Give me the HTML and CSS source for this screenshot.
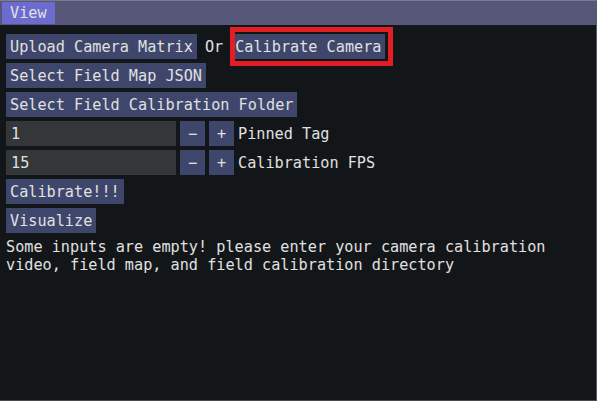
FILE: index.html
```html
<!DOCTYPE html>
<html>
<head>
<meta charset="utf-8">
<link rel="stylesheet" href="styles.css">
</head>
<body>
<div class="window">
  <div class="menubar">
    <span class="menu active">View</span>
  </div>
  <div class="content">
    <div class="row">
      <span class="btn">Upload Camera Matrix</span>
      <span class="label">Or</span>
      <span class="btn highlight-target">Calibrate Camera<span class="annot"></span></span>
    </div>
    <div class="row"><span class="btn">Select Field Map JSON</span></div>
    <div class="row"><span class="btn">Select Field Calibration Folder</span></div>
    <div class="row inner">
      <span class="input">1</span>
      <span class="btn sq">−</span>
      <span class="btn sq">+</span>
      <span class="label">Pinned Tag</span>
    </div>
    <div class="row inner">
      <span class="input">15</span>
      <span class="btn sq">−</span>
      <span class="btn sq">+</span>
      <span class="label">Calibration FPS</span>
    </div>
    <div class="row"><span class="btn">Calibrate!!!</span></div>
    <div class="row"><span class="btn">Visualize</span></div>
    <p class="msg">Some inputs are empty! please enter your camera calibration<br>video, field map, and field calibration directory</p>
  </div>
</div>
</body>
</html>
```

FILE: styles.css
```css
html, body {
  margin: 0;
  padding: 0;
  background: #131619;
}
body {
  width: 597px;
  height: 401px;
  overflow: hidden;
  font-family: "DejaVu Sans Mono", "Liberation Mono", monospace;
  font-size: 15.2px;
  line-height: 18px;
  color: #e0e0e0;
}
.window {
  box-sizing: border-box;
  width: 597px;
  height: 401px;
  border-top: 1px solid #7c7c8c;
  border-right: 1px solid #5a5a66;
  border-bottom: 1px solid #4a4a56;
  display: flex;
  flex-direction: column;
}
.menubar {
  height: 24px;
  background: #57577a;
  display: flex;
  align-items: stretch;
  padding: 1px 0 0 2px;
  box-sizing: border-box;
}
.menu {
  padding: 2px 8px 0 8px;
  box-sizing: border-box;
  height: 22px;
  white-space: pre;
}
.menu.active {
  background: #6b6bd0;
  width: 53px;
}
.content {
  padding: 9px 6px 0 6px;
  display: flex;
  flex-direction: column;
  gap: 4px;
}
.row {
  display: flex;
  align-items: center;
  gap: 8px;
}
.row.inner {
  gap: 4px;
}
.btn {
  background: #3f466c;
  padding: 4px 4px 3px 4px;
  height: 25px;
  box-sizing: border-box;
  white-space: pre;
  position: relative;
}
.btn.sq {
  width: 25px;
  padding: 4px 0 3px 0;
  text-align: center;
}
.label {
  white-space: pre;
}
.input {
  background: #333739;
  width: 170px;
  height: 25px;
  box-sizing: border-box;
  padding: 4px 5px 3px 5px;
}
.annot {
  position: absolute;
  left: -1px;
  top: -7px;
  width: 163px;
  height: 39px;
  border: 5px solid #e41c24;
  box-sizing: border-box;
  pointer-events: none;
}
.msg {
  margin: 1px 0 0 0;
  white-space: pre;
}
```
